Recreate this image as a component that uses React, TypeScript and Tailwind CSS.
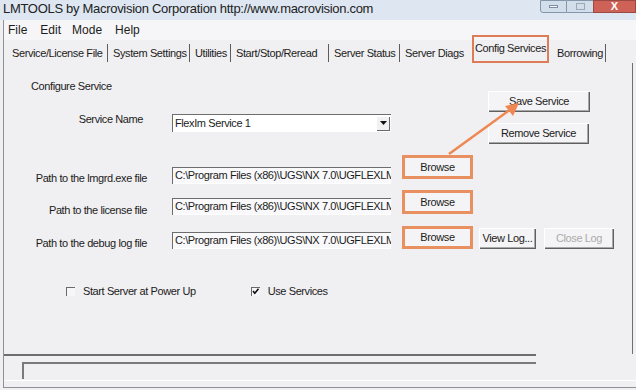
import type { ReactNode } from "react";

const FONT = { fontFamily: '"Liberation Sans", Arial, sans-serif' };

// tab strip, widths read from the separators in the reference
const TABS = [
  { label: "Service/License File", cls: "w-[101px] border-r border-[#5c5c5c]" },
  { label: "System Settings", cls: "w-[82px] border-r border-[#5c5c5c]" },
  { label: "Utilities", cls: "w-[41px] border-r border-[#5c5c5c]" },
  { label: "Start/Stop/Reread", cls: "w-[98px] border-r border-[#5c5c5c]" },
  { label: "Server Status", cls: "w-[71px] border-r border-[#5c5c5c]" },
  { label: "Server Diags", cls: "w-[72px]" },
];

// only the visible part of each path; the field clips the rest
const PATH = "C:\\Program Files (x86)\\UGS\\NX 7.0\\UGFLEXLM";

function Btn({ children, className = "", disabled = false }: { children: ReactNode; className?: string; disabled?: boolean }) {
  return (
    <div
      className={
        "flex items-center justify-center bg-[#f4f3f5] text-[11px] tracking-[-0.4px] shadow-[inset_1px_1px_0_#ffffff,inset_-1px_-1px_0_#5f5f5f,inset_-2px_-2px_0_#a9a9a9] " +
        (disabled ? "text-[#ababab] " : "text-[#1c1c1c] ") +
        className
      }
    >
      {children}
    </div>
  );
}

// orange annotation frame around a Browse button
function Marked({ className = "" }: { className?: string }) {
  return (
    <div className={"w-[71px] border-[3px] border-[#e8905f] bg-[#f4f3f5] flex items-center justify-center text-[11px] tracking-[-0.4px] text-[#1c1c1c] " + className}>
      Browse
    </div>
  );
}

function PathField({ value, className = "" }: { value: string; className?: string }) {
  return (
    <div
      className={
        "w-[219px] h-[17px] bg-[#f9f8fa] shadow-[inset_1px_1px_0_#6d6d6d,inset_-1px_-1px_0_#ffffff] pl-[3px] overflow-hidden whitespace-nowrap text-[11px] leading-[17px] tracking-[-0.4px] text-[#1c1c1c] " +
        className
      }
    >
      {value}
    </div>
  );
}

function Label({ children, className = "" }: { children: ReactNode; className?: string }) {
  return <div className={"w-[143px] text-right text-[11px] leading-[14px] tracking-[-0.4px] text-[#1c1c1c] " + className}>{children}</div>;
}

function Check({ checked }: { checked: boolean }) {
  return (
    <div className="w-[9px] h-[9px] bg-[#f6f5f7] shadow-[inset_1px_1px_0_#6a6a6a] relative">
      {checked && (
        <svg viewBox="0 0 9 9" className="absolute inset-0 w-[9px] h-[9px]">
          <path d="M2 4 L3.8 6.2 L7.5 1.8" fill="none" stroke="#111" strokeWidth="1.6" />
        </svg>
      )}
    </div>
  );
}

export default function App() {
  return (
    <div className="relative w-[636px] h-[390px] bg-[#f0eff1] overflow-hidden text-[#1c1c1c]" style={FONT}>
      {/* title bar */}
      <div className="h-[20px] flex items-start bg-[#dde6f1]">
        <div className="pl-[3px] text-[13px] leading-[18px] tracking-[-0.3px] text-[#222]">
          LMTOOLS by Macrovision Corporation http://www.macrovision.com
        </div>
        <div className="ml-auto flex h-[13px]">
          <div className="w-[27px] border border-[#8596ab] rounded-bl-[3px] bg-[#d3deeb] flex items-center justify-center">
            <div className="w-[9px] h-[3px] bg-[#f4f7fb] border border-[#7f8ea3]" />
          </div>
          <div className="w-[26px] border-y border-[#8596ab] bg-[#d3deeb] flex items-center justify-center">
            <div className="w-[9px] h-[7px] border border-[#9aa8ba]" />
          </div>
          <div className="w-[43px] border border-[#9a4a42] bg-[#cf6256] flex items-center justify-center text-white text-[11px] font-bold leading-none">
            X
          </div>
        </div>
      </div>

      {/* client area */}
      <div className="ml-[3px] h-[368px] border-l border-[#8e9196] border-b">
        {/* menu bar */}
        <div className="h-[20px] bg-[#f6f6f8] flex items-center text-[12px] leading-[20px] text-[#1c1c1c]">
          <span className="ml-[4px]">File</span>
          <span className="ml-[13px]">Edit</span>
          <span className="ml-[11px]">Mode</span>
          <span className="ml-[13px]">Help</span>
        </div>

        {/* tabs */}
        <div className="h-[23px] flex items-end pl-[3px] text-[11px] tracking-[-0.4px]">
          {TABS.map((t) => (
            <div key={t.label} className={"h-[18px] mb-[1px] pl-[5px] leading-[18px] whitespace-nowrap " + t.cls}>
              {t.label}
            </div>
          ))}
          <div className="w-[77px] h-[28px] border-2 border-[#dd7d57] pl-[1px] leading-[22px] whitespace-nowrap">Config Services</div>
          <div className="w-[57px] h-[18px] mb-[1px] pl-[8px] leading-[18px] border-r border-[#5c5c5c]">Borrowing</div>
        </div>

        {/* tab page */}
        <div className="w-[629px] h-[291px] border-r border-[#6f6f6f]">
          <div className="flex">
            <div className="w-[484px]">
              <div className="pt-[16px] pl-[27px] text-[11px] leading-[14px] tracking-[-0.4px]">Configure Service</div>
              <div className="flex items-start mt-[19px]">
                <Label className="pr-[4px]">Service Name</Label>
                <div className="ml-[25px] mt-[2px] w-[219px] h-[18px] bg-white shadow-[inset_1px_1px_0_#6d6d6d] flex items-center">
                  <span className="pl-[3px] text-[11px] tracking-[-0.4px]">FlexIm Service 1</span>
                  <div className="ml-auto mr-[1px] w-[14px] h-[15px] bg-[#f1f0f2] shadow-[inset_1px_1px_0_#ffffff,inset_-1px_-1px_0_#6a6a6a] flex items-center justify-center">
                    <svg viewBox="0 0 7 4" className="w-[7px] h-[4px]">
                      <path d="M0 0 H7 L3.5 4 Z" fill="#111" />
                    </svg>
                  </div>
                </div>
              </div>
            </div>
            <div className="pt-[28px] flex flex-col gap-[11px]">
              <Btn className="w-[102px] h-[21px]">Save Service</Btn>
              <Btn className="w-[101px] h-[21px]">Remove Service</Btn>
            </div>
          </div>

          {/* path rows */}
          <div className="flex items-start mt-[11px] h-[30px]">
            <Label className="mt-[16px]">Path to the lmgrd.exe file</Label>
            <PathField value={PATH} className="ml-[25px] mt-[12px]" />
            <Marked className="ml-[11px] h-[24px]" />
          </div>
          <div className="flex items-start mt-[5px] h-[27px]">
            <Label className="mt-[13px]">Path to the license file</Label>
            <PathField value={PATH} className="ml-[25px] mt-[8px]" />
            <Marked className="ml-[11px] h-[24px]" />
          </div>
          <div className="flex items-start mt-[9px] h-[24px]">
            <Label className="mt-[10px]">Path to the debug log file</Label>
            <PathField value={PATH} className="ml-[25px] mt-[6px]" />
            <Marked className="ml-[11px] h-[23px]" />
            <Btn className="ml-[6px] mt-[2px] w-[57px] h-[21px]">View Log...</Btn>
            <Btn disabled className="ml-[8px] mt-[2px] w-[70px] h-[21px]">Close Log</Btn>
          </div>

          {/* checkboxes */}
          <div className="flex items-center mt-[34px] h-[14px] text-[11px] tracking-[-0.4px]">
            <div className="ml-[62px]">
              <Check checked={false} />
            </div>
            <span className="ml-[8px]">Start Server at Power Up</span>
            <div className="ml-[55px]">
              <Check checked />
            </div>
            <span className="ml-[8px]">Use Services</span>
          </div>
        </div>

        {/* status area */}
        <div className="h-[33px]">
          <div className="w-[532px] h-[2px] bg-[#6e6e6e]" />
          <div className="ml-[18px] mt-[6px] w-[514px] h-[17px] border-t-2 border-l-2 border-[#7a7a7a]" />
          <div className="mt-[1px] h-[1px] bg-white" />
        </div>
      </div>

      {/* annotation arrow */}
      <svg className="absolute left-0 top-0 pointer-events-none" width="636" height="390">
        <line x1="449" y1="154" x2="511" y2="109" stroke="#ee8752" strokeWidth="2.5" />
        <path d="M519 103 L505 106 L513 116 Z" fill="#ee8752" />
      </svg>
    </div>
  );
}
